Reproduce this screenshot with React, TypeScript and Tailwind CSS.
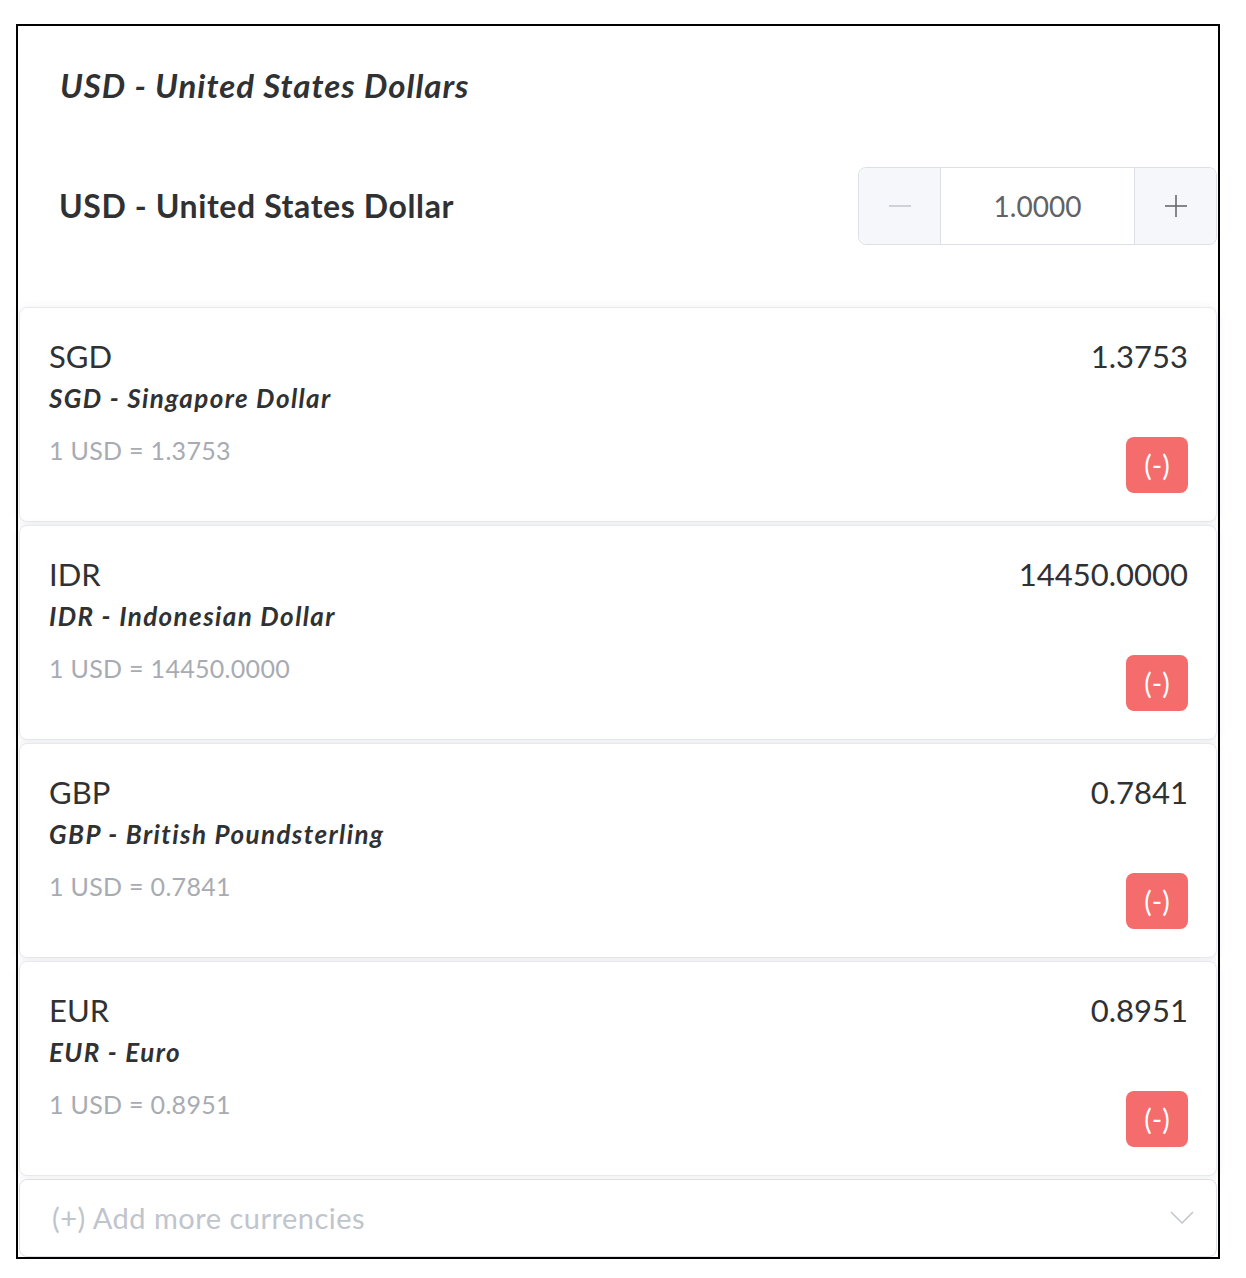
const rates = [
  { code: "SGD", name: "SGD - Singapore Dollar", value: "1.3753" },
  { code: "IDR", name: "IDR - Indonesian Dollar", value: "14450.0000" },
  { code: "GBP", name: "GBP - British Poundsterling", value: "0.7841" },
  { code: "EUR", name: "EUR - Euro", value: "0.8951" },
];

function RateCard({ code, name, value }: { code: string; name: string; value: string }) {
  return (
    <div className="mx-px flex h-[215px] justify-between rounded-lg border border-[#e6e9f0] bg-white pt-[28px] pr-[28px] pb-[28px] pl-[29px] shadow-[0_2px_12px_0_rgba(0,0,0,0.07)]">
      <div className="flex flex-col">
        <div className="text-[31px] leading-10 text-[#303133]">{code}</div>
        <div className="text-[26px] leading-[44px] font-bold tracking-[1.4px] italic text-[#303133]">{name}</div>
        <div className="mt-[10px] text-[25px] leading-10 tracking-[0.3px] text-[#a8abb2]">1 USD = {value}</div>
      </div>
      <div className="flex flex-col items-end justify-between">
        <div className="text-[31px] leading-10 text-[#303133]">{value}</div>
        <button
          type="button"
          className="h-14 w-[62px] rounded-lg bg-[#f56c6c] text-[28px] text-white"
        >
          (-)
        </button>
      </div>
    </div>
  );
}

export default function App() {
  return (
    <div className="bg-white pb-5 font-['Lato',sans-serif]">
      <div className="mt-6 ml-4 w-[1204px] border-2 border-black">
        <h3 className="pt-[39px] pl-[42px] text-[33px] leading-10 font-bold tracking-[1px] italic text-[#303133]">
          USD - United States Dollars
        </h3>
        <div className="mt-[62px] flex items-center justify-between pr-px pl-[41px]">
          <h2 className="text-[32px] font-bold tracking-[0.6px] text-[#303133]">USD - United States Dollar</h2>
          <div className="flex h-[78px] w-[359px] rounded-lg border border-[#dcdfe6] bg-white">
            <button
              type="button"
              className="flex w-[82px] items-center justify-center rounded-l-lg border-r border-[#dcdfe6] bg-[#f5f7fa]"
            >
              <svg width="24" height="24" viewBox="0 0 24 24" fill="none" stroke="#c0c4cc" strokeWidth="1.5">
                <path d="M1 12h22" />
              </svg>
            </button>
            <div className="flex flex-1 items-center justify-center text-[28px] text-[#606266]">1.0000</div>
            <button
              type="button"
              className="flex w-[82px] items-center justify-center rounded-r-lg border-l border-[#dcdfe6] bg-[#f5f7fa]"
            >
              <svg width="24" height="24" viewBox="0 0 24 24" fill="none" stroke="#606266" strokeWidth="1.5">
                <path d="M1 12h22M12 1v22" />
              </svg>
            </button>
          </div>
        </div>
        <div className="mt-[62px] flex flex-col gap-[3px]">
          {rates.map((r) => (
            <RateCard key={r.code} {...r} />
          ))}
          <div className="mx-px flex h-[78px] items-center justify-between rounded-lg border border-[#dcdfe6] bg-white pr-[22px] pl-[32px]">
            <span className="text-[29px] tracking-[0.5px] text-[#c0c4cc]">(+) Add more currencies</span>
            <svg width="24" height="14" viewBox="0 0 24 14" fill="none" stroke="#c0c4cc" strokeWidth="1.5">
              <path d="M1 1l11 11L23 1" />
            </svg>
          </div>
        </div>
      </div>
    </div>
  );
}
